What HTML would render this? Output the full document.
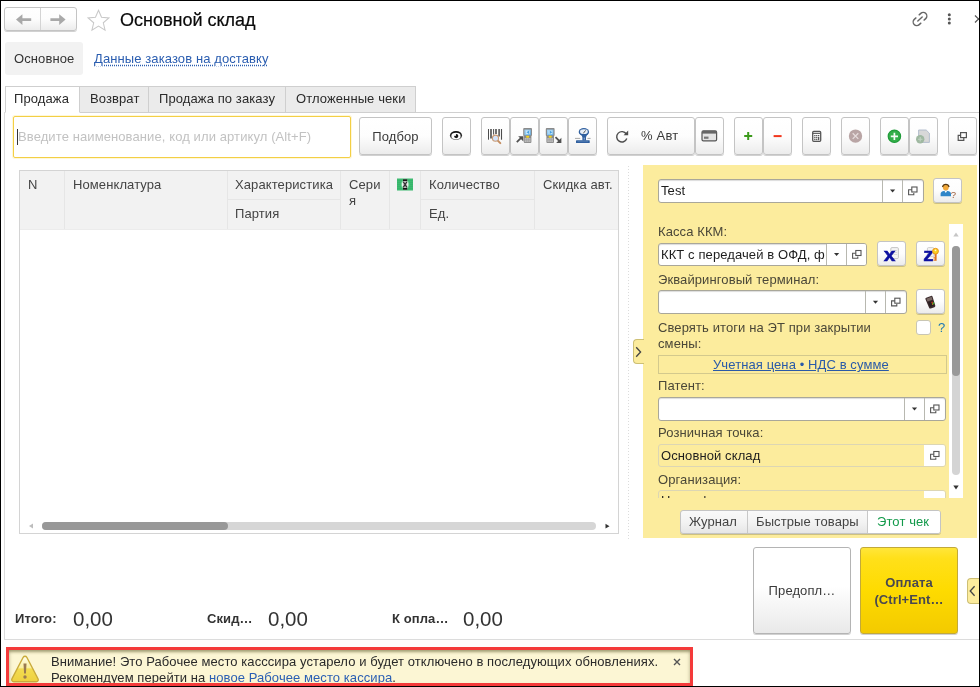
<!DOCTYPE html>
<html lang="ru">
<head>
<meta charset="utf-8">
<title>Основной склад</title>
<style>
*{box-sizing:border-box;margin:0;padding:0}
html,body{width:980px;height:687px;overflow:hidden;background:#fff}
body{font-family:"Liberation Sans",Arial,sans-serif;font-size:13px;color:#333;position:relative;letter-spacing:.1px}
#wrap{position:absolute;left:0;top:0;width:980px;height:687px;overflow:hidden;will-change:transform}
.abs{position:absolute}
#frame{position:absolute;left:0;top:0;width:980px;height:687px;border:1px solid #000;pointer-events:none;z-index:50}
.btn{position:absolute;border:1px solid #c4c4c4;border-radius:3px;background:linear-gradient(#ffffff 0%,#fdfdfd 50%,#ececec 100%);box-shadow:0 1px 0 rgba(0,0,0,.18);display:flex;align-items:center;justify-content:center;color:#3a3a3a;white-space:nowrap}
.t{position:absolute;white-space:nowrap;line-height:16px}
a{color:#2a5db0}
/* tabs */
.tab{position:absolute;top:86px;height:27px;border:1px solid #cfcfcf;border-left:none;background:#ebebeb;line-height:24px;padding:0 0 0 10px;color:#2a2a2a;white-space:nowrap}
.tab.act{background:#fff;border-left:1px solid #d0d0d0;border-bottom-color:#fff;z-index:2}
/* table */
.th{position:absolute;background:#f2f2f2;color:#444;white-space:nowrap;padding:6px 0 0 8px;line-height:16px;border-left:1px solid #e4e4e4}
/* panel */
.fld{position:absolute;height:23px;border:1px solid #a9a79a;border-radius:3px;background:#fff;line-height:21px;padding-left:2px;white-space:nowrap;overflow:hidden;color:#1e1e1e;font-size:13px;box-shadow:inset 0 1px 1px rgba(0,0,0,.14)}
.fld.ro{background:#fcec9d;border-color:#dcd6b4;box-shadow:none}
.sep{position:absolute;top:0;bottom:0;width:1px;background:#b8b8b0}
.hd{color:#444}
.lbl{position:absolute;white-space:nowrap;color:#4a4738;line-height:16px;font-size:13px}
</style>
</head>
<body>
<div id="wrap">
<div id="frame"></div>

<!-- top bar -->
<div class="btn" style="left:4px;top:7px;width:73px;height:24px"></div>
<div class="abs" style="left:40px;top:8px;width:1px;height:22px;background:#d4d4d4"></div>
<svg class="abs" style="left:4px;top:7px" width="73" height="25" viewBox="0 0 73 25"><g fill="#a9a9a9"><path d="M12 12.6l6.4-5.4v4.100h8.800v2.600h-8.800v4.100z"/><path d="M61.600 12.600l-6.400-5.400v4.100h-8.800v2.600h8.800v4.100z"/></g></svg>
<svg class="abs" style="left:85.800px;top:7.500px" width="25" height="25" viewBox="0 0 24 24"><path d="M12 2.2l2.9 6.7 7.1.6-5.4 4.7 1.7 7-6.3-3.8-6.3 3.8 1.7-7L2 9.5l7.1-.6z" fill="#fff" stroke="#c8c8c8" stroke-width="1"/></svg>
<div class="t" style="left:120px;top:9px;font-size:18px;line-height:22px;color:#0a0a0a;letter-spacing:0;-webkit-text-stroke:.2px #0a0a0a">Основной склад</div>
<svg class="abs" style="left:911.300px;top:9.700px" width="18" height="18" viewBox="0 0 18 18"><g transform="rotate(-43 9 9)" fill="none" stroke="#666" stroke-width="1.400" stroke-linecap="round"><path d="M6.800 5.400H4.600a3.600 3.600 0 000 7.200h2.200"/><path d="M11.200 5.400h2.200a3.600 3.600 0 010 7.200h-2.200"/><path d="M6 9h6"/></g></svg>
<svg class="abs" style="left:946px;top:12px" width="6" height="14" viewBox="0 0 6 14"><g fill="#555"><circle cx="3.300" cy="2.700" r="1.500"/><circle cx="3.300" cy="6.900" r="1.500"/><circle cx="3.300" cy="11.100" r="1.500"/></g></svg>
<svg class="abs" style="left:972px;top:12px" width="8" height="14" viewBox="0 0 8 14"><path d="M3 3.500l7 7M3 10.500l7-7" stroke="#555" stroke-width="1.200" fill="none"/></svg>

<!-- nav row -->
<div class="abs" style="left:5px;top:42px;width:78px;height:33px;background:#f2f2f2;border-radius:3px"></div>
<div class="t" style="left:14px;top:51px;color:#333">Основное</div>
<div class="t" style="left:94px;top:51px"><a style="text-decoration:underline;text-decoration-style:dotted;text-underline-offset:2px">Данные заказов на доставку</a></div>

<!-- tabs -->
<div class="abs" style="left:5px;top:112px;width:974px;height:1px;background:#d0d0d0"></div>
<div class="tab act" style="left:5px;width:75px;padding-left:8px">Продажа</div>
<div class="tab" style="left:80px;width:69px">Возврат</div>
<div class="tab" style="left:149px;width:137px">Продажа по заказу</div>
<div class="tab" style="left:286px;width:130px">Отложенные чеки</div>

<!-- input -->
<div class="abs" style="left:13px;top:116px;width:338px;height:42px;border:1px solid #f3cf45;border-radius:2px;background:#fff;box-shadow:0 0 0 1px rgba(255,225,100,.25)"></div>
<div class="abs" style="left:17px;top:129px;width:1px;height:16px;background:#333"></div>
<div class="t" style="left:18px;top:129px;color:#c2c2c2">Введите наименование, код или артикул (Alt+F)</div>

<!-- toolbar buttons -->
<div class="btn" style="left:359px;top:117px;width:73px;height:38px">Подбор</div>
<div class="btn" style="left:442px;top:117px;width:29px;height:38px"></div>
<div class="btn" style="left:481px;top:117px;width:29px;height:38px"></div>
<div class="btn" style="left:510px;top:117px;width:29px;height:38px"></div>
<div class="btn" style="left:539px;top:117px;width:29px;height:38px"></div>
<div class="btn" style="left:568px;top:117px;width:29px;height:38px"></div>
<div class="btn" style="left:607px;top:117px;width:88px;height:38px"></div>
<div class="btn" style="left:695px;top:117px;width:29px;height:38px"></div>
<div class="btn" style="left:734px;top:117px;width:29px;height:38px"></div>
<div class="btn" style="left:763px;top:117px;width:29px;height:38px"></div>
<div class="btn" style="left:802px;top:117px;width:29px;height:38px"></div>
<div class="btn" style="left:841px;top:117px;width:29px;height:38px"></div>
<div class="btn" style="left:880px;top:117px;width:29px;height:38px"></div>
<div class="btn" style="left:909px;top:117px;width:29px;height:38px"></div>
<div class="btn" style="left:948px;top:117px;width:29px;height:38px"></div>
<svg class="abs" style="left:0;top:0" width="980" height="687" viewBox="0 0 980 687">
<!-- eye -->
<defs><linearGradient id="eyeg" x1="0" y1="0" x2="0" y2="1"><stop offset="0" stop-color="#0c0c0c"/><stop offset=".55" stop-color="#2a2a2a"/><stop offset="1" stop-color="#8a8a8a"/></linearGradient></defs>
<ellipse cx="456" cy="135.500" rx="6.100" ry="4.500" fill="url(#eyeg)"/><ellipse cx="456" cy="135.950" rx="4.600" ry="3.200" fill="#fff"/>
<circle cx="456.200" cy="136.100" r="2.150" fill="#161616"/><circle cx="455" cy="134.900" r="1.050" fill="#fff"/>
<!-- barcode search -->
<g stroke="#4c4c4c"><path d="M488.500 129v10.700" stroke-width="1"/><path d="M491 129v9.600" stroke-width="1.600"/><path d="M493.600 129v5.600" stroke-width="1"/><path d="M496 129v5" stroke-width="1.600"/><path d="M499.100 129v7.500" stroke-width="1.500"/><path d="M501.500 129v10.700" stroke-width="1.100"/></g>
<path d="M497.800 140.600l2.500 2.500" stroke="#c48e62" stroke-width="2" stroke-linecap="round"/><circle cx="495.500" cy="138.200" r="3.050" fill="#d3e3fb" stroke="#c99a74" stroke-width="1.100"/>
<!-- device in -->
<defs><linearGradient id="scr" x1="0" y1="0" x2="1" y2="1"><stop offset="0" stop-color="#a8d6f6"/><stop offset="1" stop-color="#63b2ea"/></linearGradient>
</defs>
<g transform="translate(523.200 128.100)"><path d="M0.900 0h7q0.900 0 0.900 0.900v6.300l-0.600 1v5.600q0 1-1 1h-5.600q-1 0-1-1v-5.600l-0.600-1v-6.300q0-0.900 0.900-0.900z" fill="#8b8b8b"/><rect x="1.200" y="1.500" width="6.400" height="5.600" fill="url(#scr)"/><rect x="2.700" y="2.400" width="3.900" height="3.600" fill="#e0f1fc" opacity=".75"/><rect x="2.800" y="7.700" width="3.200" height="1.900" rx=".9" fill="#f3d31c"/><rect x="1.500" y="10" width="5.800" height="4" fill="#c2c2c2"/><path d="M3.400 10v4M5.400 10v4M1.500 11.300h5.800M1.500 12.700h5.800" stroke="#9a9a9a" stroke-width=".5"/></g><path d="M526.500 132.300l2.600-1.700v3.400z" fill="#4aa0e0"/>
<path d="M516.800 142.200l4.600-4.600" stroke="#505050" stroke-width="1.800" fill="none"/><path d="M518.200 136.200h5.200v5.200z" fill="#505050"/>
<!-- device out -->
<g transform="translate(545.800 128.100)"><path d="M0.900 0h7q0.900 0 0.900 0.900v6.300l-0.600 1v5.600q0 1-1 1h-5.600q-1 0-1-1v-5.600l-0.600-1v-6.300q0-0.900 0.900-0.900z" fill="#8b8b8b"/><rect x="1.200" y="1.500" width="6.400" height="5.600" fill="url(#scr)"/><rect x="2.700" y="2.400" width="3.900" height="3.600" fill="#e0f1fc" opacity=".75"/><rect x="2.800" y="7.700" width="3.200" height="1.900" rx=".9" fill="#f3d31c"/><rect x="1.500" y="10" width="5.800" height="4" fill="#c2c2c2"/><path d="M3.400 10v4M5.400 10v4M1.500 11.300h5.800M1.500 12.700h5.800" stroke="#9a9a9a" stroke-width=".5"/></g><path d="M552.300 132.300l-2.600-1.700v3.400z" fill="#4aa0e0"/>
<path d="M555.500 137.200l4.200 4.200" stroke="#505050" stroke-width="1.800" fill="none"/><path d="M561.400 137.800v5.200h-5.200z" fill="#505050"/>
<!-- scales -->
<path d="M575 138.400h5.200M587.400 138.400h3.200" stroke="#a8a8a8" stroke-width="1"/>
<ellipse cx="583.900" cy="132" rx="5.200" ry="3.900" fill="#2f5f9f"/><path d="M580.300 134.300q2.100 1.500 2.100 3.200v3h3.600v-3q0-1.700 2.100-3.200z" fill="#2f5f9f"/>
<ellipse cx="583.900" cy="131.700" rx="3.900" ry="2.400" fill="#e8f0f9"/><path d="M583.300 133.400l2.300-3" stroke="#444" stroke-width=".9"/>
<rect x="583.800" y="137.600" width=".8" height="2" fill="#b8cce4"/>
<rect x="576" y="140.300" width="13.700" height="2.800" rx=".4" fill="#2f5f9f"/><path d="M577.500 141.600h10.600" stroke="#5f86bb" stroke-width=".6"/>
<!-- refresh -->
<path d="M626.300 134A5.200 5.200 0 10626.800 138.600" fill="none" stroke="#4c4c4c" stroke-width="1.400"/><path d="M623.600 135.200h4.600v-4.600z" fill="#4c4c4c"/>
<!-- card -->
<rect x="702" y="130.8" width="14.6" height="10" rx="1.4" fill="#e4e4e4" stroke="#555" stroke-width="1.2"/><rect x="702" y="131" width="14.6" height="2.6" fill="#666"/><rect x="704" y="136.6" width="4.5" height="2.2" fill="#777"/>
<!-- plus / minus -->
<path d="M748.2 132.1v8M744.2 136.1h8" stroke="#3c9a1c" stroke-width="2"/>
<path d="M773.6 136.1h8" stroke="#f1351b" stroke-width="2"/>
<!-- calc -->
<rect x="812.700" y="131.500" width="8" height="9.800" rx="1" fill="#fff" stroke="#555" stroke-width="1.300"/><path d="M813 133.500h7.400" stroke="#555" stroke-width=".9"/><g fill="#555"><rect x="814.2" y="135" width="1.3" height="1.3"/><rect x="816.1" y="135" width="1.3" height="1.3"/><rect x="818" y="135" width="1.3" height="1.3"/><rect x="814.2" y="137" width="1.3" height="1.3"/><rect x="816.1" y="137" width="1.3" height="1.3"/><rect x="818" y="137" width="1.3" height="3.2"/><rect x="814.2" y="138.9" width="1.3" height="1.3"/><rect x="816.1" y="138.9" width="1.3" height="1.3"/></g>
<!-- gray x -->
<circle cx="855.5" cy="136.1" r="6.7" fill="#b9a5a5"/><path d="M852.7 133.3l5.6 5.6M858.3 133.3l-5.6 5.6" stroke="#e6dcdc" stroke-width="1.3"/>
<!-- green plus -->
<circle cx="894.400" cy="136.300" r="6.200" fill="#33ae49" stroke="#1f9b39" stroke-width="1.200"/><path d="M894.400 132.700v7.200M890.800 136.300h7.200" stroke="#f4fbf5" stroke-width="1.700"/>
<!-- doc plus -->
<path d="M918.600 130h7.600l3.200 3.200v9.200h-10.800z" fill="#d8d8d8" stroke="#aeb9cb" stroke-width=".9"/>
<circle cx="920.200" cy="139.300" r="4.200" fill="#9fb8a1"/><path d="M920.200 137.100v4.400M918 139.300h4.400" stroke="#c2d3c3" stroke-width="1.100"/>
<!-- windows -->
<g fill="none" stroke="#555" stroke-width="1.200"><rect x="960.600" y="132.600" width="5.800" height="5"/><path d="M960.600 135.300h-2.400v5h5.600v-2.700"/></g>
</svg>
<div class="t" style="left:641px;top:128px;color:#3a3a3a;letter-spacing:.2px">% Авт</div>
<!-- TOOLBAR-ICONS-END -->

<!-- table -->
<div class="abs" style="left:19px;top:170px;width:600px;height:364px;border:1px solid #d4d4d4;background:#fff"></div>
<div class="abs" style="left:20px;top:171px;width:598px;height:59px;background:#f2f2f2;border-bottom:1px solid #ececec"></div>
<div class="abs" style="left:64px;top:171px;width:1px;height:58px;background:#e6e6e6"></div>
<div class="abs" style="left:227px;top:171px;width:1px;height:58px;background:#e6e6e6"></div>
<div class="abs" style="left:340px;top:171px;width:1px;height:58px;background:#e6e6e6"></div>
<div class="abs" style="left:389px;top:171px;width:1px;height:58px;background:#e6e6e6"></div>
<div class="abs" style="left:420px;top:171px;width:1px;height:58px;background:#e6e6e6"></div>
<div class="abs" style="left:534px;top:171px;width:1px;height:58px;background:#e6e6e6"></div>
<div class="abs" style="left:228px;top:199px;width:112px;height:1px;background:#e6e6e6"></div>
<div class="abs" style="left:421px;top:199px;width:113px;height:1px;background:#e6e6e6"></div>
<div class="t hd" style="left:28px;top:177px">N</div>
<div class="t hd" style="left:73px;top:177px">Номенклатура</div>
<div class="t hd" style="left:235px;top:177px">Характеристика</div>
<div class="t hd" style="left:235px;top:206px">Партия</div>
<div class="t hd" style="left:349px;top:177px">Сери<br>я</div>
<div class="t hd" style="left:429px;top:177px">Количество</div>
<div class="t hd" style="left:429px;top:206px">Ед.</div>
<div class="t hd" style="left:543px;top:177px">Скидка авт.</div>
<svg class="abs" style="left:397px;top:178px" width="16" height="13" viewBox="0 0 16 13"><defs><radialGradient id="bn" cx=".5" cy=".5" r=".5"><stop offset="0" stop-color="#fff"/><stop offset=".55" stop-color="#e9f7ee"/><stop offset="1" stop-color="#3dba70" stop-opacity="0"/></radialGradient></defs><rect y=".5" width="16" height="12" fill="#3dba70"/><path d="M0 2.500h16M0 4.500h16M0 6.500h16M0 8.500h16M0 10.500h16" stroke="#33b166" stroke-width=".6"/><ellipse cx="8.100" cy="6.500" rx="5" ry="6" fill="url(#bn)"/><rect x="6" y="1.300" width="4.200" height="10.400" fill="#bdbdbd"/><rect x="6" y="1.300" width="4.200" height="1.700" fill="#141414"/><rect x="6" y="10" width="4.200" height="1.700" fill="#141414"/><path d="M6.300 3.800l3.600 5.600M9.900 3.800L6.300 9.400" stroke="#2a2a2a" stroke-width="1.100"/></svg>
<!-- h scrollbar -->
<div class="abs" style="left:42px;top:522px;width:554px;height:8px;border-radius:4px;background:#d6d6d6"></div>
<div class="abs" style="left:42px;top:522px;width:186px;height:8px;border-radius:4px;background:#989898"></div>
<svg class="abs" style="left:28px;top:522px" width="6" height="8" viewBox="0 0 6 8"><path d="M5 1.600v4.800L1 4z" fill="#bdbdbd"/></svg>
<svg class="abs" style="left:605px;top:522px" width="6" height="8" viewBox="0 0 6 8"><path d="M0.500 1.800v4.800L4.500 4.200z" fill="#333"/></svg>
<!-- dotted splitter -->
<div class="abs" style="left:628px;top:166px;width:1px;height:373px;background:repeating-linear-gradient(#dcdcdc 0,#dcdcdc 1px,transparent 1px,transparent 3px)"></div>


<div class="abs" style="left:643px;top:165px;width:334px;height:373px;background:#fcec9d"></div>
<!-- collapse handle -->
<div class="abs" style="left:633px;top:339px;width:11px;height:25px;background:#fcec9d;border:1px solid #cdbf74;border-right:none;border-radius:4px 0 0 4px"></div>
<svg class="abs" style="left:634px;top:345px" width="9" height="14" viewBox="0 0 9 14"><path d="M2.2 2.2L6.6 7 2.2 11.8" fill="none" stroke="#444" stroke-width="1.3"/></svg>

<div class="fld" style="left:658px;top:179px;width:266px;height:24px;line-height:22px">Test<i class="sep" style="left:223px"></i><i class="sep" style="left:243px"></i></div>
<div class="btn" style="left:933px;top:178px;width:29px;height:25px"></div>

<div class="lbl" style="left:658px;top:224px">Касса ККМ:</div>
<div class="fld" style="left:658px;top:243px;width:209px">ККТ с передачей в ОФД, ф<i class="sep" style="left:167px"></i><i class="sep" style="left:187px"></i><i class="abs" style="left:168px;top:0;width:40px;height:21px;background:#fff"></i><i class="sep" style="left:187px"></i></div>
<div class="btn" style="left:877px;top:241px;width:29px;height:25px"></div>
<div class="btn" style="left:916px;top:241px;width:29px;height:25px"></div>

<div class="lbl" style="left:658px;top:272px">Эквайринговый терминал:</div>
<div class="fld" style="left:658px;top:290px;width:249px;height:24px"><i class="sep" style="left:206px"></i><i class="sep" style="left:226px"></i></div>
<div class="btn" style="left:916px;top:289px;width:29px;height:25px"></div>

<div class="lbl" style="left:658px;top:320px">Сверять итоги на ЭТ при закрытии<br>смены:</div>
<div class="abs" style="left:916px;top:320px;width:15px;height:15px;background:#fff;border:1px solid #c9c6b4;border-radius:3px"></div>
<div class="lbl" style="left:938px;top:319.500px;color:#1d78b5">?</div>

<div class="abs" style="left:658px;top:355px;width:289px;height:19px;border:1px solid #d3c98d"></div>
<div class="lbl" style="left:713px;top:357px"><a style="text-decoration:underline;color:#2a5aa8">Учетная цена • НДС в сумме</a></div>

<div class="lbl" style="left:658px;top:378px">Патент:</div>
<div class="fld" style="left:658px;top:397px;width:288px;height:24px"><i class="sep" style="left:245px"></i><i class="sep" style="left:265px"></i></div>

<div class="lbl" style="left:658px;top:425px">Розничная точка:</div>
<div class="fld ro" style="left:658px;top:444px;width:288px">Основной склад<i class="abs" style="left:265px;top:0;width:22px;height:21px;background:#fff"></i></div>

<div class="lbl" style="left:658px;top:472px">Организация:</div>
<div class="abs" style="left:658px;top:490px;width:288px;height:8px;overflow:hidden"><div class="fld ro" style="left:0;top:0;width:288px;line-height:20px">Наша фирма<i class="abs" style="left:265px;top:0;width:22px;height:21px;background:#fff"></i></div></div>

<!-- inner scrollbar -->
<div class="abs" style="left:949px;top:224px;width:14px;height:274px;background:#fff"></div>
<div class="abs" style="left:952px;top:246px;width:8px;height:229px;border-radius:4px;background:#d4d4d4"></div>
<div class="abs" style="left:952px;top:246px;width:8px;height:130px;border-radius:4px;background:#999"></div>
<svg class="abs" style="left:953px;top:232px" width="6" height="5" viewBox="0 0 6 5"><path d="M0.300 4.500h5.400L3 0.500z" fill="#c6c6c6"/></svg>
<svg class="abs" style="left:953px;top:484.500px" width="6" height="5" viewBox="0 0 6 5"><path d="M0.300 0.500h5.400L3 4.500z" fill="#333"/></svg>

<!-- bottom panel buttons -->
<div class="btn" style="left:680px;top:510px;width:261px;height:24px;background:linear-gradient(#f9f9f9,#f3f3f3 50%,#e6e6e6)"></div>
<div class="abs" style="left:868px;top:511px;width:72px;height:22px;background:#fff;border-radius:0 2px 2px 0"></div>
<div class="abs" style="left:747px;top:511px;width:1px;height:22px;background:#c8c8c8"></div>
<div class="abs" style="left:867px;top:511px;width:1px;height:22px;background:#c8c8c8"></div>
<div class="t" style="left:689px;top:514px;color:#444">Журнал</div>
<div class="t" style="left:756px;top:514px;color:#444">Быстрые товары</div>
<div class="t" style="left:877px;top:514px;color:#139a4b">Этот чек</div>

<svg class="abs" style="left:0;top:0" width="980" height="687" viewBox="0 0 980 687">
<path d="M890.0 189.60000000000002h5.2l-2.6 2.9z" fill="#333"/><g fill="none" stroke="#555" stroke-width="1.1"><rect x="911.8" y="187.0" width="5.2" height="5"/><path d="M911.8 189.7H908.6v5h5.2v-1.8"/></g><path d="M834.0 253.10000000000002h5.2l-2.6 2.9z" fill="#333"/><g fill="none" stroke="#555" stroke-width="1.1"><rect x="855.8" y="250.5" width="5.2" height="5"/><path d="M855.8 253.2H852.6v5h5.2v-1.8"/></g><path d="M872.9 300.8h5.2l-2.6 2.9z" fill="#333"/><g fill="none" stroke="#555" stroke-width="1.1"><rect x="894.8" y="298.2" width="5.2" height="5"/><path d="M894.8 300.9H891.6v5h5.2v-1.8"/></g><path d="M911.9 407.6h5.2l-2.6 2.9z" fill="#333"/><g fill="none" stroke="#555" stroke-width="1.1"><rect x="933.8" y="405.0" width="5.2" height="5"/><path d="M933.8 407.7H930.6v5h5.2v-1.8"/></g><g fill="none" stroke="#555" stroke-width="1.1"><rect x="933.8" y="451.5" width="5.2" height="5"/><path d="M933.8 454.2H930.6v5h5.2v-1.8"/></g>
<!-- user? icon -->
<circle cx="945.800" cy="187.500" r="2.900" fill="#f2a93a"/><path d="M942.500 187a3.400 3.400 0 016.600 0" fill="none" stroke="#5a3a10" stroke-width="1.200"/>
<path d="M940.600 196.200v-2.400c0-2 2.200-3 5.200-3s5.200 1 5.200 3v2.400z" fill="#2f86c8"/><path d="M944.500 190.900l1.300 2.200 1.300-2.200z" fill="#fff"/>
<text x="950.800" y="197.800" font-family="Liberation Sans, sans-serif" font-size="9.500" fill="#9a5a3a">?</text>
<!-- X report -->
<rect x="890.800" y="247.600" width="7.600" height="11" rx="1.200" fill="#f4f4f4" stroke="#b8b8b8" stroke-width=".8"/><path d="M893.500 250.500h3.600M893.500 252.500h3.600M893.500 254.500h3.600" stroke="#d0d0d0" stroke-width=".7"/>
<text x="883.700" y="260.900" font-family="Liberation Sans, sans-serif" font-weight="bold" font-size="18.500" fill="#0c10a0" stroke="#0c10a0" stroke-width=".5" textLength="11.800" lengthAdjust="spacingAndGlyphs">x</text>
<!-- Z report -->
<rect x="927.400" y="247.600" width="6.600" height="9" rx="1.200" fill="#f4f4f4" stroke="#c4c4c4" stroke-width=".8"/>
<text x="923.300" y="260.900" font-family="Liberation Sans, sans-serif" font-weight="bold" font-size="18.500" fill="#0c10a0" stroke="#0c10a0" stroke-width=".5" textLength="10.400" lengthAdjust="spacingAndGlyphs">z</text>
<path d="M934.700 253.500h1.900v7.300h-1.900z" fill="#e0741c"/><path d="M933.500 257.300h1.300v1.200h-1.300zM933.500 259.400h1.300v1.300h-1.300z" fill="#e0741c"/>
<circle cx="935.500" cy="251.200" r="2.900" fill="#f9cf20" stroke="#e8941c" stroke-width="1"/><circle cx="935.500" cy="250.300" r=".9" fill="#fff8d0"/>
<!-- terminal -->
<g transform="translate(930.600 302.300) rotate(-20) scale(.84) translate(-930 -302)"><path d="M925.500 296.500q0-1.500 1.500-1.500h6q1.500 0 1.500 1.500l-.6 11q-.1 1.500-1.600 1.500h-4.600q-1.500 0-1.600-1.500z" fill="#3a2a2c"/><path d="M926.700 296.300h6.600l-.2 3.600h-6.200z" fill="#7a6a66"/><rect x="927.200" y="301.200" width="5.600" height="5.800" fill="#2a2022"/><rect x="930.800" y="302" width="1.600" height="1.600" fill="#e03020"/><rect x="930.800" y="304" width="1.600" height="1.400" fill="#f0c020"/><rect x="932.300" y="303.200" width="1.500" height="2.200" fill="#38b030"/></g>
</svg>
<!-- PANEL-END -->

<!-- tab page border -->
<div class="abs" style="left:4px;top:112px;width:1px;height:528px;background:#dcdcdc"></div>
<div class="abs" style="left:4px;top:639px;width:975px;height:1px;background:#dcdcdc"></div>

<div class="btn" style="left:753px;top:547px;width:98px;height:87px;border-color:#b4b4b4;background:linear-gradient(#fff 0%,#fff 45%,#e9e9e9 100%)">Предопл…</div>
<div class="btn" style="left:860px;top:547px;width:98px;height:87px;border-color:#c2a93a;background:linear-gradient(#ffe63a 0%,#ffe01a 12%,#fedb00 50%,#f3ca00 100%);font-weight:bold;text-align:center;line-height:17px;color:#484850;padding-top:1px">Оплата<br>(Ctrl+Ent…</div>
<div class="abs" style="left:967px;top:578px;width:12px;height:26px;background:#fcec9d;border:1px solid #cdbf74;border-right:none;border-radius:4px 0 0 4px"></div>
<svg class="abs" style="left:968px;top:584px" width="9" height="14" viewBox="0 0 9 14"><path d="M6.6 2.2L2.2 7l4.4 4.8" fill="none" stroke="#444" stroke-width="1.3"/></svg>

<div class="t" style="left:15px;top:611px;font-weight:bold;color:#333">Итого:</div>
<div class="t" style="left:73px;top:607px;font-size:20.500px;line-height:24px;color:#333;letter-spacing:0">0,00</div>
<div class="t" style="left:207px;top:611px;font-weight:bold;color:#333">Скид…</div>
<div class="t" style="left:268px;top:607px;font-size:20.500px;line-height:24px;color:#333;letter-spacing:0">0,00</div>
<div class="t" style="left:392px;top:611px;font-weight:bold;color:#333">К опла…</div>
<div class="t" style="left:463px;top:607px;font-size:20.500px;line-height:24px;color:#333;letter-spacing:0">0,00</div>

<!-- notification -->
<div class="abs" style="left:9px;top:650px;width:681px;height:36px;background:#fcf6d4;box-shadow:inset 0 3px 3px -1px rgba(110,105,60,.55),inset 0 0 4px rgba(110,105,60,.35)"></div>
<div class="abs" style="left:6px;top:647px;width:687px;height:39px;border:3px solid #f43a3a;z-index:20"></div>
<svg class="abs" style="left:10px;top:654px" width="30" height="29" viewBox="0 0 30 29"><defs><linearGradient id="wg" x1="0" y1="0" x2="0" y2="1"><stop offset="0" stop-color="#fffdf0"/><stop offset=".45" stop-color="#fbf0a0"/><stop offset=".5" stop-color="#f3dc50"/><stop offset="1" stop-color="#eed040"/></linearGradient></defs><path d="M15 2.2c.8 0 1.400.400 1.800 1.100l11.200 21.400c.8 1.500-.1 3-1.800 3H3.800c-1.700 0-2.600-1.500-1.800-3L13.200 3.300c.4-.7 1-1.100 1.800-1.100z" fill="url(#wg)" stroke="#c9aa3a" stroke-width="1.4"/><path d="M13.500 9.500h3l-.6 10h-1.800z" fill="#9a7a50"/><circle cx="15" cy="23" r="1.700" fill="#9a7a50"/></svg>
<div class="t" style="left:51px;top:654px;color:#2a2a2a;letter-spacing:.075px">Внимание! Это Рабочее место касссира устарело и будет отключено в последующих обновлениях.</div>
<div class="t" style="left:51px;top:670px;color:#2a2a2a;letter-spacing:.075px">Рекомендуем перейти на <a style="color:#2b5fb3;text-decoration:none">новое Рабочее место кассира</a>.</div>
<svg class="abs" style="left:673px;top:658px" width="8" height="8" viewBox="0 0 8 8"><path d="M1 1l6 6M7 1L1 7" stroke="#555" stroke-width="1.4"/></svg>
<!-- BOTTOM-END -->

</div>
</body>
</html>
